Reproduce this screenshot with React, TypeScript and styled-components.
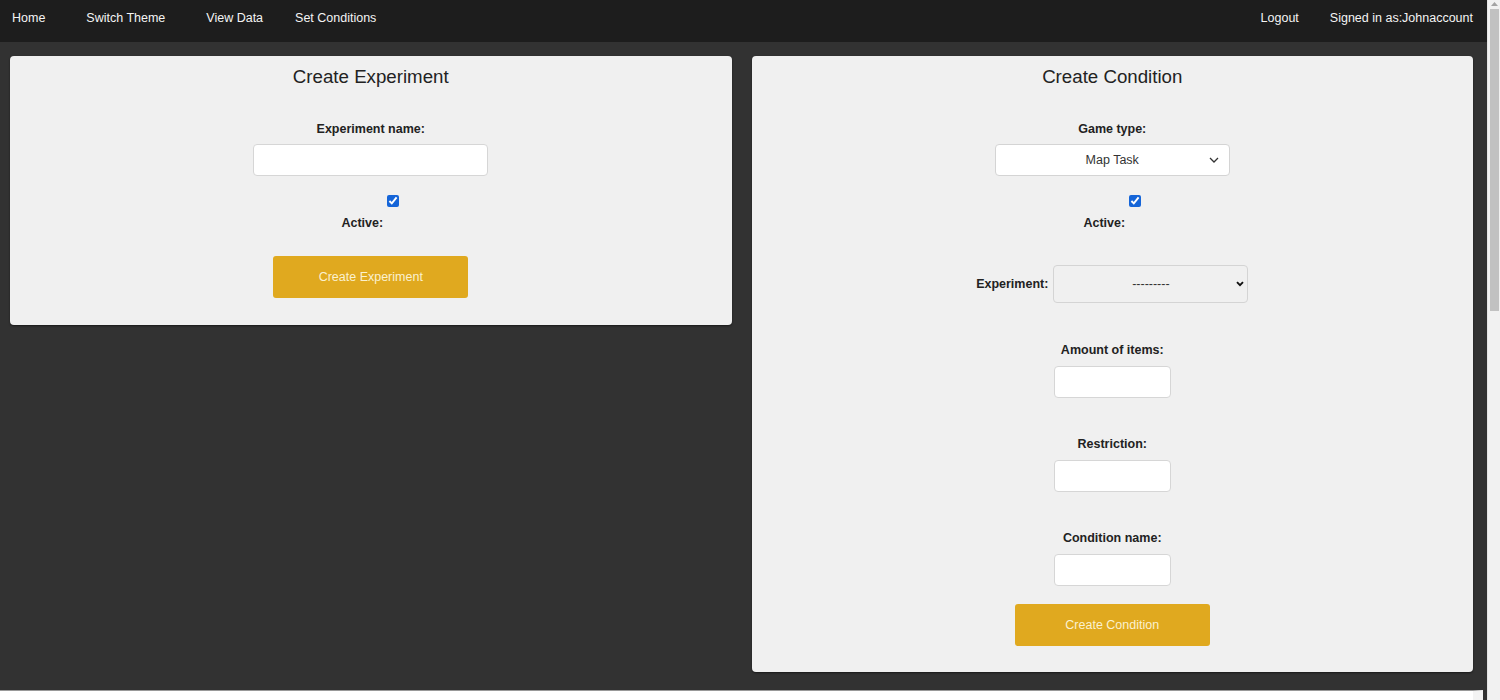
import React from "react";
import styled, { createGlobalStyle } from "styled-components";

const GlobalStyle = createGlobalStyle`
  html, body { margin: 0; padding: 0; }
  body {
    background: #323232;
    font-family: "Liberation Sans", Arial, sans-serif;
    color: #222;
  }
  * { box-sizing: border-box; }
`;

const Page = styled.div`
  display: flex;
  flex-direction: column;
  min-height: 1240px;
  margin-right: 13px;
`;

const ScrollRail = styled.div`
  position: fixed;
  top: 0;
  right: 0;
  width: 13px;
  height: 100vh;
  background: #f1f1f1;
  border-left: 1px solid #e4e4e4;
  display: flex;
  flex-direction: column;
  align-items: center;
  padding-top: 2px;
`;

const ScrollArrow = styled.svg`
  flex: none;
`;

const ScrollThumb = styled.div`
  width: 9px;
  height: 302px;
  margin-top: 3px;
  background: #c1c1c1;
`;

const NavBar = styled.nav`
  height: 42px;
  background: #1d1d1d;
  display: flex;
  align-items: center;
  justify-content: space-between;
  padding: 0 14px 0 12px;
`;

const NavGroup = styled.div<{ $gap: number }>`
  display: flex;
  align-items: center;
  gap: ${(p) => p.$gap}px;
`;

const NavLink = styled.a<{ $ml?: number }>`
  color: #f4f4f4;
  font-size: 12.5px;
  text-decoration: none;
  cursor: pointer;
  line-height: 1;
  margin-top: -6px;
  margin-left: ${(p) => p.$ml ?? 0}px;
`;

const Main = styled.main`
  display: grid;
  grid-template-columns: 1fr 1fr;
  gap: 20px;
  align-items: start;
  padding: 14px 14px 18px 10px;
`;

const Card = styled.section<{ $pb: number }>`
  background: #f0f0f0;
  border-radius: 4px;
  box-shadow: 0 1px 2px rgba(0, 0, 0, 0.5);
  display: flex;
  flex-direction: column;
  align-items: center;
  padding: 10px 20px ${(p) => p.$pb}px;
`;

const Title = styled.h2`
  margin: 0;
  font-size: 18.7px;
  line-height: 22px;
  font-weight: normal;
  color: #222;
`;

const Label = styled.label<{ $mt: number; $shift?: number }>`
  display: block;
  margin-top: ${(p) => p.$mt}px;
  margin-right: ${(p) => (p.$shift ?? 0) * 2}px;
  font-size: 12.5px;
  line-height: 15px;
  font-weight: bold;
  color: #222;
`;

const TextInput = styled.input<{ $w: number; $mt: number }>`
  width: ${(p) => p.$w}px;
  height: 32px;
  margin-top: ${(p) => p.$mt}px;
  border: 1px solid #d6d6d6;
  border-radius: 4px;
  background: #fff;
  font-family: inherit;
  font-size: 12.5px;
  outline: none;
`;

const SelectWrap = styled.div<{ $w: number; $h: number; $mt: number }>`
  position: relative;
  width: ${(p) => p.$w}px;
  height: ${(p) => p.$h}px;
  margin-top: ${(p) => p.$mt}px;
`;

const Select = styled.select<{ $bg: string }>`
  appearance: none;
  width: 100%;
  height: 100%;
  border: 1px solid #d4d4d4;
  border-radius: 4px;
  background: ${(p) => p.$bg};
  font-family: inherit;
  font-size: 12.5px;
  color: #333;
  text-align: center;
  text-align-last: center;
  padding: 0 20px;
  outline: none;
`;

const Chevron = styled.svg<{ $right: number }>`
  position: absolute;
  right: ${(p) => p.$right}px;
  top: 50%;
  transform: translateY(-50%);
  pointer-events: none;
`;

const Check = styled.input`
  width: 12px;
  height: 12px;
  margin: 19px 0 0 45px;
  accent-color: #1565d8;
`;

const Button = styled.button<{ $mt: number }>`
  width: 195px;
  height: 42px;
  margin-top: ${(p) => p.$mt}px;
  background: #e0a91f;
  border: none;
  border-radius: 3px;
  color: #fbf1cf;
  font-family: inherit;
  font-size: 12.5px;
  cursor: pointer;
`;

const Row = styled.div`
  display: flex;
  align-items: center;
  gap: 5px;
  margin-top: 34px;
`;

const InlineLabel = styled.span`
  font-size: 12.5px;
  font-weight: bold;
  color: #222;
`;

const Footer = styled.footer`
  flex: 1;
  background: #fff;
  border-top: 1px solid #999;
  border-right: 10px solid #f3f3f3;
  margin-right: 4px;
`;

const ThinChevron = () => (
  <Chevron $right={11} width="10" height="6" viewBox="0 0 10 6">
    <path d="M1 1l4 4 4-4" fill="none" stroke="#333" strokeWidth="1.3" />
  </Chevron>
);

const BoldChevron = () => (
  <Chevron $right={4} width="8" height="6" viewBox="0 0 8 6">
    <path d="M1 1.2l3 3 3-3" fill="none" stroke="#111" strokeWidth="1.9" />
  </Chevron>
);

export default function App() {
  return (
    <>
      <GlobalStyle />
      <Page>
        <NavBar>
          <NavGroup $gap={41}>
            <NavLink>Home</NavLink>
            <NavLink>Switch Theme</NavLink>
            <NavLink>View Data</NavLink>
            <NavLink $ml={-9}>Set Conditions</NavLink>
          </NavGroup>
          <NavGroup $gap={31}>
            <NavLink>Logout</NavLink>
            <NavLink>Signed in as:Johnaccount</NavLink>
          </NavGroup>
        </NavBar>
        <Main>
          <Card $pb={27}>
            <Title>Create Experiment</Title>
            <Label $mt={34}>Experiment name:</Label>
            <TextInput $w={235} $mt={7} />
            <Check type="checkbox" defaultChecked />
            <Label $mt={9} $shift={8.5}>Active:</Label>
            <Button $mt={25}>Create Experiment</Button>
          </Card>
          <Card $pb={26}>
            <Title>Create Condition</Title>
            <Label $mt={34}>Game type:</Label>
            <SelectWrap $w={235} $h={32} $mt={7}>
              <Select $bg="#fff" defaultValue="map">
                <option value="map">Map Task</option>
              </Select>
              <ThinChevron />
            </SelectWrap>
            <Check type="checkbox" defaultChecked />
            <Label $mt={9} $shift={8}>Active:</Label>
            <Row>
              <InlineLabel>Experiment:</InlineLabel>
              <SelectWrap $w={195} $h={38} $mt={0}>
                <Select $bg="#f0f0f0" defaultValue="none">
                  <option value="none">---------</option>
                </Select>
                <BoldChevron />
              </SelectWrap>
            </Row>
            <Label $mt={40}>Amount of items:</Label>
            <TextInput $w={117} $mt={8} />
            <Label $mt={39}>Restriction:</Label>
            <TextInput $w={117} $mt={8} />
            <Label $mt={39}>Condition name:</Label>
            <TextInput $w={117} $mt={8} />
            <Button $mt={18}>Create Condition</Button>
          </Card>
        </Main>
        <Footer />
      </Page>
      <ScrollRail>
        <ScrollArrow width="7" height="4" viewBox="0 0 7 4">
          <path d="M0 4L3.5 0 7 4z" fill="#a3a3a3" />
        </ScrollArrow>
        <ScrollThumb />
      </ScrollRail>
    </>
  );
}
